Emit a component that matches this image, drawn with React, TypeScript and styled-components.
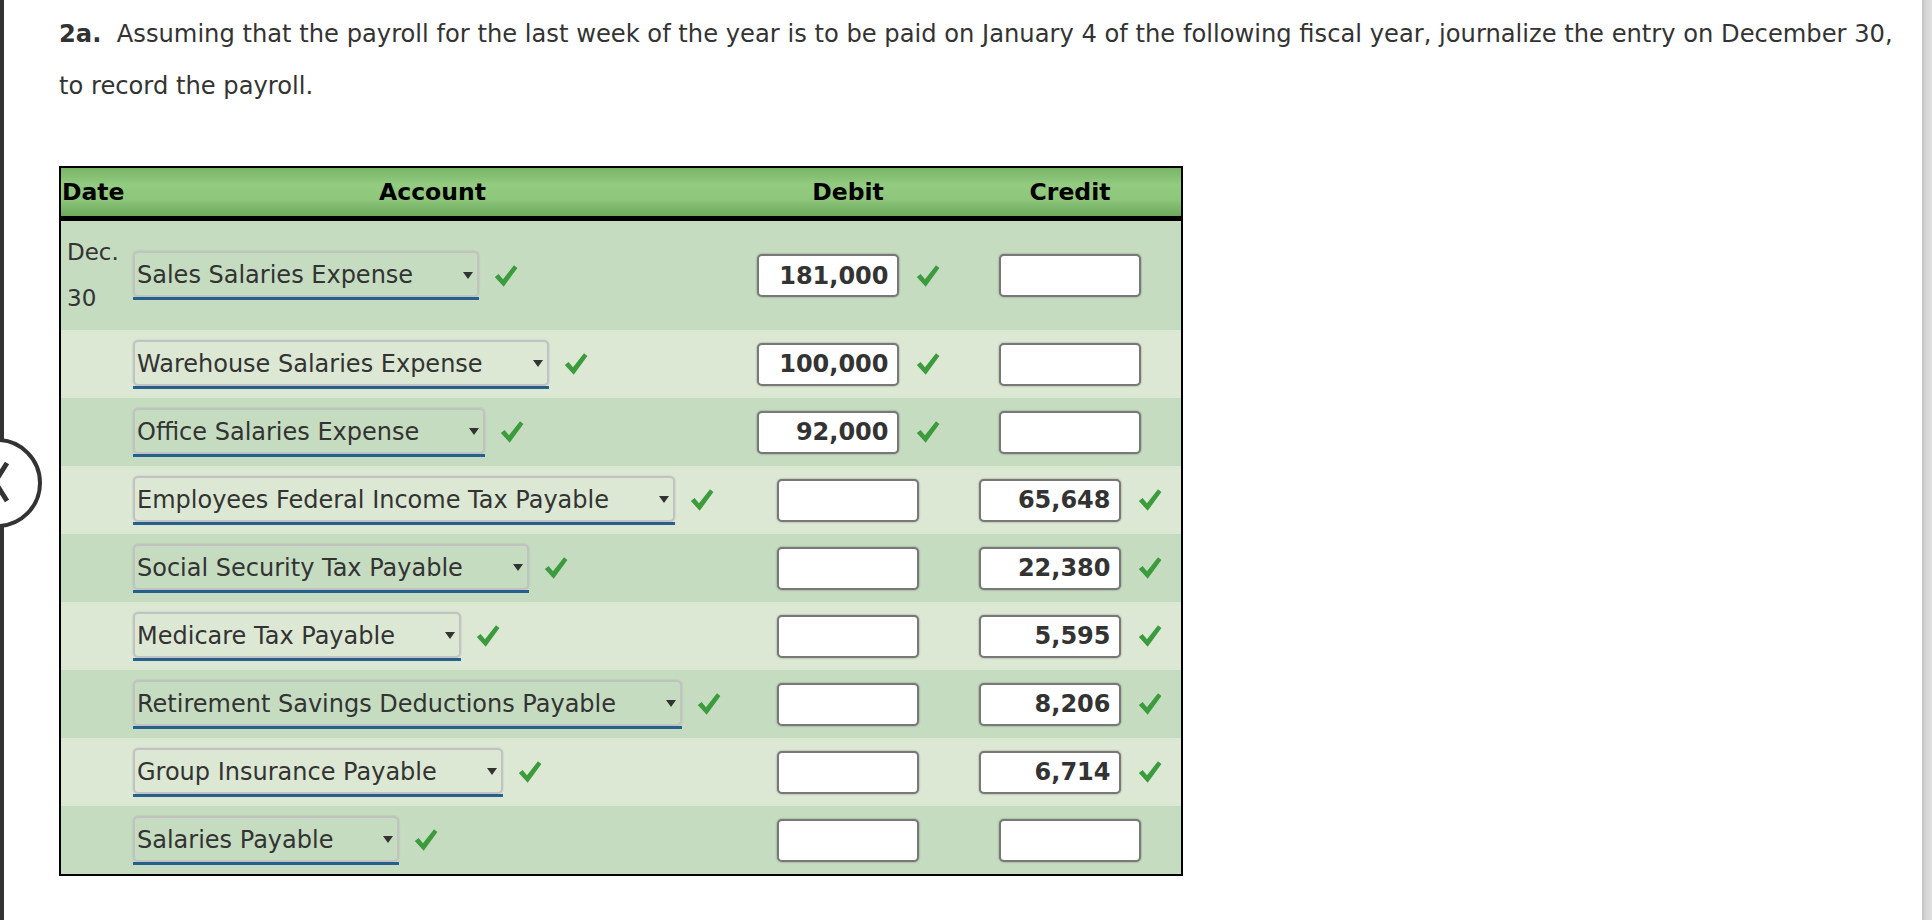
import styled, { createGlobalStyle } from "styled-components";

const GlobalStyles = createGlobalStyle`
  html, body {
    margin: 0;
    padding: 0;
    background: #fff;
  }
  body {
    font-family: "DejaVu Sans", Verdana, sans-serif;
    color: #333;
  }
`;

const Page = styled.div`
  position: relative;
  display: flex;
  width: 100%;
  height: 920px;
  overflow: hidden;
`;

const LeftRail = styled.div`
  width: 4px;
  flex: none;
  background: #333;
`;

const RightRail = styled.div`
  width: 10px;
  flex: none;
  background: linear-gradient(to right, #c2c2c2, #d6d6d6 40%, #dedede);
`;

const Main = styled.main`
  flex: 1 1 0;
  min-width: 0;
  padding: 8px 0 0 55px;
`;

const Prompt = styled.p`
  margin: 0;
  font-size: 24.2px;
  line-height: 52px;
  color: #333;
  white-space: nowrap;

  b {
    font-weight: bold;
  }
`;

const Journal = styled.div`
  margin-top: 54px;
  width: 1120px;
  border: 2px solid #000;
`;

const COLUMNS = "67px 609px 222px 222px";

const HeaderRow = styled.div`
  display: grid;
  grid-template-columns: ${COLUMNS};
  height: 48px;
  border-bottom: 5px solid #000;
  background: linear-gradient(to bottom, #78b468 0%, #93cb80 35%, #8ec67b 65%, #6ca95d 100%);
`;

const HeadCell = styled.div<{ $align?: string }>`
  display: flex;
  align-items: center;
  justify-content: ${({ $align }) => $align || "center"};
  padding-left: ${({ $align }) => ($align === "flex-start" ? "1px" : "0")};
  font-size: 23.5px;
  font-weight: bold;
  color: #000;
`;

const Row = styled.div<{ $tall?: boolean; $shade: boolean }>`
  display: grid;
  grid-template-columns: ${COLUMNS};
  height: ${({ $tall }) => ($tall ? "109px" : "68px")};
  background: ${({ $shade }) => ($shade ? "#c5dcc0" : "#dce8d3")};
`;

const DateCell = styled.div`
  padding: 8px 0 0 6px;
  font-size: 23px;
  line-height: 46px;
  color: #333;
`;

const AccountCell = styled.div`
  display: flex;
  align-items: center;
  padding-left: 5px;
`;

const AmountCell = styled.div`
  display: flex;
  align-items: center;
  justify-content: center;
`;

const SelectWrap = styled.div`
  display: flex;
  flex-direction: column;
  border-bottom: 3px solid #26628f;
`;

const SelectBox = styled.div`
  display: flex;
  align-items: center;
  gap: 50px;
  height: 46px;
  box-sizing: border-box;
  padding: 2px 4px 0 2px;
  border: 2px solid #c2c2c2;
  border-radius: 5px;
  box-shadow: 0 0 2px rgba(0, 0, 0, 0.15);
  font-size: 24px;
  color: #333;
  white-space: nowrap;
`;

const Arrow = styled.span`
  width: 0;
  height: 0;
  border-left: 5.5px solid transparent;
  border-right: 5.5px solid transparent;
  border-top: 7px solid #333;
`;

const AmountInput = styled.div`
  width: 142px;
  height: 43px;
  box-sizing: border-box;
  padding-right: 8px;
  display: flex;
  align-items: center;
  justify-content: flex-end;
  background: #fff;
  border: 2px solid #787878;
  border-radius: 5px;
  box-shadow: 0 0 2px rgba(0, 0, 0, 0.4);
  font-size: 24px;
  font-weight: bold;
  color: #333;
`;

const CheckMark = styled.svg<{ $gap: number }>`
  width: 24px;
  height: 24px;
  margin-left: ${({ $gap }) => $gap}px;
  flex-shrink: 0;
`;

const PagerButton = styled.div`
  position: absolute;
  left: -48px;
  top: 438px;
  width: 90px;
  height: 90px;
  box-sizing: border-box;
  border: 4px solid #333;
  border-radius: 50%;
  background: #fff;
  overflow: hidden;

  svg {
    position: absolute;
    inset: 0;
  }
`;

function Check({ gap = 16 }: { gap?: number }) {
  return (
    <CheckMark $gap={gap} viewBox="0 0 24 24">
      <path d="M0.8 13 L4.6 9.9 L9 15.2 L20 1.2 L23.4 3.9 L9.7 22.8 Z" fill="#3b9b3d" />
    </CheckMark>
  );
}

type Entry = { account: string; debit?: string; credit?: string };

const entries: Entry[] = [
  { account: "Sales Salaries Expense", debit: "181,000" },
  { account: "Warehouse Salaries Expense", debit: "100,000" },
  { account: "Office Salaries Expense", debit: "92,000" },
  { account: "Employees Federal Income Tax Payable", credit: "65,648" },
  { account: "Social Security Tax Payable", credit: "22,380" },
  { account: "Medicare Tax Payable", credit: "5,595" },
  { account: "Retirement Savings Deductions Payable", credit: "8,206" },
  { account: "Group Insurance Payable", credit: "6,714" },
  { account: "Salaries Payable" },
];

function Amount({ value }: { value?: string }) {
  return (
    <AmountCell>
      <AmountInput>{value}</AmountInput>
      {value && <Check gap={17} />}
    </AmountCell>
  );
}

export default function App() {
  return (
    <>
      <GlobalStyles />
      <Page>
        <LeftRail />
        <Main>
          <Prompt>
            <b>2a.</b>{"\u00a0 "}Assuming that the payroll for the last week of the year is to be paid on
            January 4 of the following fiscal year, journalize the entry on December 30,
            <br />
            to record the payroll.
          </Prompt>
          <Journal>
            <HeaderRow>
              <HeadCell $align="flex-start">Date</HeadCell>
              <HeadCell>Account</HeadCell>
              <HeadCell>Debit</HeadCell>
              <HeadCell>Credit</HeadCell>
            </HeaderRow>
            {entries.map((e, i) => (
              <Row key={e.account} $tall={i === 0} $shade={i % 2 === 0}>
                <DateCell>
                  {i === 0 && (
                    <>
                      Dec.
                      <br />
                      30
                    </>
                  )}
                </DateCell>
                <AccountCell>
                  <SelectWrap>
                    <SelectBox>
                      <span>{e.account}</span>
                      <Arrow />
                    </SelectBox>
                  </SelectWrap>
                  <Check gap={15} />
                </AccountCell>
                <Amount value={e.debit} />
                <Amount value={e.credit} />
              </Row>
            ))}
          </Journal>
        </Main>
        <RightRail />
        <PagerButton>
          <svg viewBox="0 0 82 82" width="82" height="82">
            <path d="M51 21 L39 40 L51 59" fill="none" stroke="#333" strokeWidth="5" />
          </svg>
        </PagerButton>
      </Page>
    </>
  );
}
